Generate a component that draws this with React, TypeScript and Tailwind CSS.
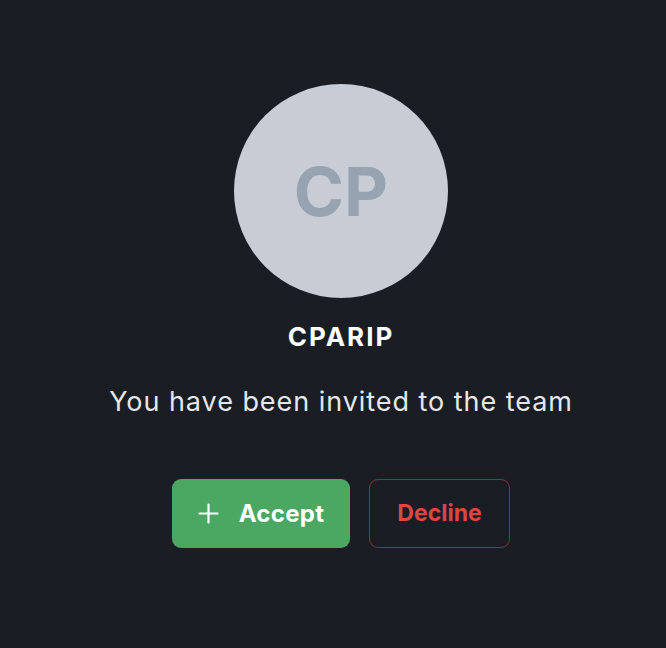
import React from "react";

export default function App() {
  return (
    <div
      className="w-[666px] h-[648px] bg-[#1a1d24] flex flex-col items-center pl-[16px]"
      style={{ fontFamily: "Inter, 'Noto Sans', sans-serif" }}
    >
      <div className="mt-[84px] w-[214px] h-[214px] rounded-full bg-[#c8cdd5] flex items-center justify-center">
        <span className="text-[68px] font-bold text-[#97a3b0] leading-none">CP</span>
      </div>
      <div className="mt-[23px] text-[26px] font-bold text-white leading-[32px] tracking-[2px]">CPARIP</div>
      <div className="mt-[32px] text-[27px] text-[#e5e7eb] leading-[34px] tracking-[0.95px]">You have been invited to the team</div>
      <div className="mt-[60px] flex gap-[19px]">
        <button className="w-[178px] h-[69px] rounded-[9px] bg-[#4aa862] text-white flex items-center justify-center gap-[20px] text-[24px] font-bold tracking-[0.3px]">
          <svg width="21" height="21" viewBox="0 0 21 21" fill="none" stroke="currentColor" strokeWidth="2.2" strokeLinecap="round">
            <path d="M10.5 1.5v18M1.5 10.5h18" />
          </svg>
          <span>Accept</span>
        </button>
        <button className="w-[141px] h-[69px] rounded-[9px] border-[1.5px] border-[#833634] text-[#dc4740] flex items-center justify-center text-[23px] font-bold">
          Decline
        </button>
      </div>
    </div>
  );
}
